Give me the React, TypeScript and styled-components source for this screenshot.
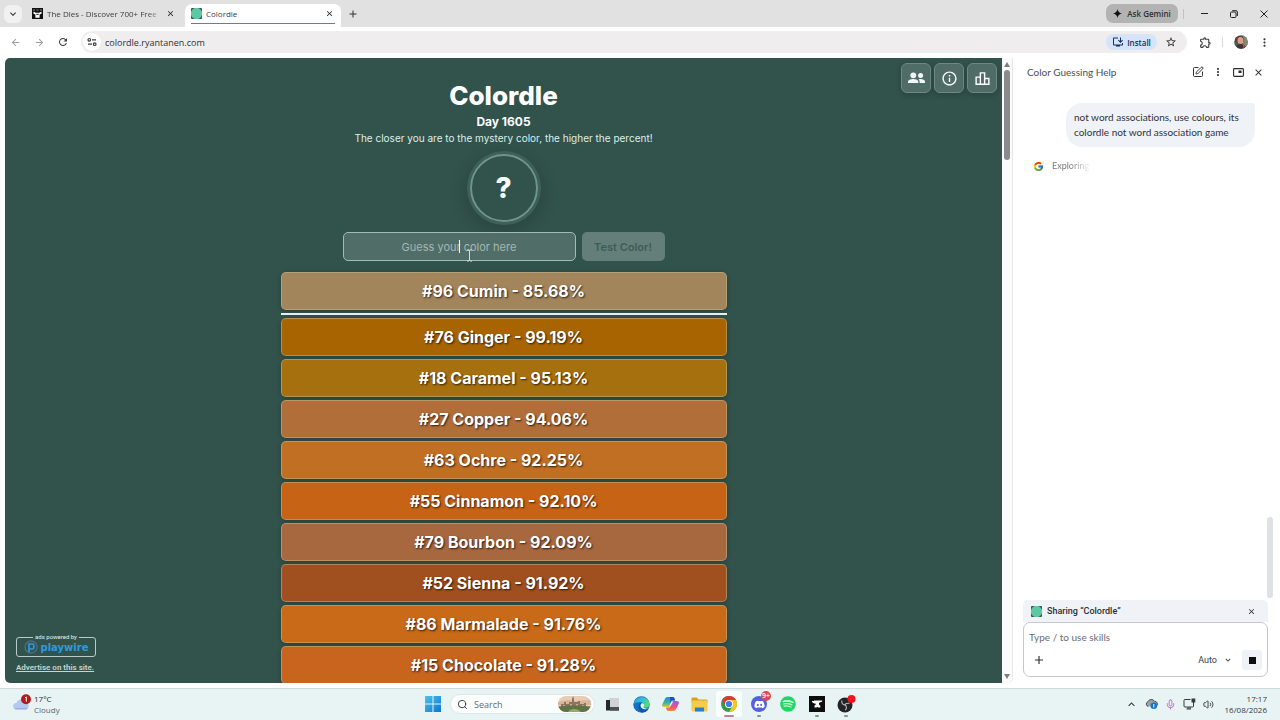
import React from "react";
import styled, { createGlobalStyle } from "styled-components";
import {
  MdAdd,
  MdArrowBack,
  MdArrowForward,
  MdClose,
  MdInfoOutline,
  MdInstallDesktop,
  MdKeyboardArrowDown,
  MdKeyboardArrowUp,
  MdMoreVert,
  MdOutlineExtension,
  MdOutlineLeaderboard,
  MdRefresh,
  MdStarBorder,
} from "react-icons/md";
import { FcGoogle } from "react-icons/fc";
import { FaDiscord, FaSpotify } from "react-icons/fa";
import { Mic, Search, SquarePen, Volume2 } from "lucide-react";

const UI = `"Open Sans", "Noto Sans", sans-serif`;
const PAGE = `Inter, "Liberation Sans", sans-serif`;
const PANEL = `Lato, Roboto, sans-serif`;

const GlobalStyle = createGlobalStyle`
  *, *::before, *::after { box-sizing: border-box; }
  body { margin: 0; background: #ffffff; font-family: ${UI}; color: #303134; }
  button { border: 0; padding: 0; margin: 0; background: none; color: inherit; font: inherit; cursor: pointer; }
  svg { display: block; flex: none; }
`;

const Desktop = styled.div`
  height: 100vh;
  display: flex;
  flex-direction: column;
  overflow: hidden;
`;

/* ---------- browser chrome ---------- */

const TabStrip = styled.header`
  flex: none;
  height: 27px;
  display: flex;
  align-items: center;
  padding: 0 1px 0 4px;
  background: #e1e1e1;
`;

const TabSearch = styled.button`
  width: 18px;
  height: 18px;
  border-radius: 6px;
  background: #f1f1f1;
  display: grid;
  place-items: center;
`;

const Tab = styled.div<{ $active?: boolean }>`
  align-self: flex-end;
  position: relative;
  width: ${(p) => (p.$active ? 156 : 159)}px;
  height: 23px;
  margin-left: ${(p) => (p.$active ? 0 : 4)}px;
  padding: 0 ${(p) => (p.$active ? 5 : 8)}px 4px 6px;
  display: flex;
  align-items: center;
  gap: 4px;
  border-radius: 7px 7px 0 0;
  background: ${(p) => (p.$active ? "#ffffff" : "transparent")};
  font-size: 8px;
  color: #3c3c3c;
`;

const TabTitle = styled.span<{ $fade?: boolean }>`
  flex: 1;
  min-width: 0;
  white-space: nowrap;
  ${(p) => p.$fade && "mask-image: linear-gradient(90deg, #000 90%, rgba(0, 0, 0, 0.2));"}
`;

const TabClose = styled.button`
  width: 14px;
  height: 14px;
  display: grid;
  place-items: center;
  color: #222222;
`;

const TabLine = styled.div`
  position: absolute;
  left: 6px;
  right: 6px;
  bottom: 3px;
  height: 1px;
  background: #4a7fdc;
`;

const NewTab = styled.button`
  margin-left: 4px;
  width: 16px;
  height: 16px;
  display: grid;
  place-items: center;
`;

const AskGemini = styled.button`
  margin-left: auto;
  height: 19px;
  width: 72px;
  border-radius: 7px;
  background: #b3b3b3;
  display: flex;
  align-items: center;
  justify-content: center;
  gap: 5px;
  font-size: 8px;
  font-weight: 600;
  color: #303030;
`;

const Divider = styled.span<{ $color?: string }>`
  width: 1px;
  height: 10px;
  margin: 0 5px;
  background: ${(p) => p.$color ?? "#c2c2c2"};
`;

const WindowButton = styled.button`
  width: 30px;
  height: 20px;
  display: grid;
  place-items: center;
`;

const Toolbar = styled.nav`
  flex: none;
  height: 31px;
  display: flex;
  align-items: center;
  padding: 0 4px 1px 3px;
  background: #ffffff;
`;

const ToolButton = styled.button<{ $dim?: boolean }>`
  width: 24px;
  height: 20px;
  display: grid;
  place-items: center;
  color: ${(p) => (p.$dim ? "#9a9a9a" : "#3c3c3c")};
`;

const Omnibox = styled.div`
  flex: 1;
  height: 22px;
  margin: 0 6px;
  padding: 0 10px 0 2px;
  border-radius: 11px;
  background: #efeded;
  display: flex;
  align-items: center;
`;

const SiteInfo = styled.button`
  width: 18px;
  height: 18px;
  border-radius: 9px;
  background: #ffffff;
  display: grid;
  place-items: center;
`;

const Address = styled.input`
  flex: 1;
  min-width: 0;
  margin-left: 4px;
  padding: 0;
  border: 0;
  outline: 0;
  background: transparent;
  font: 9px ${UI};
  color: #303134;
`;

const Install = styled.button`
  height: 16px;
  width: 51px;
  margin-right: 8px;
  border-radius: 8px;
  background: #d5e4f9;
  color: #15305e;
  display: flex;
  align-items: center;
  justify-content: center;
  gap: 3px;
  font-size: 8px;
  font-weight: 600;
`;

const Avatar = styled.button`
  margin: 0 4px 0 6px;
`;

/* ---------- page ---------- */

const Content = styled.div`
  flex: 1;
  min-height: 0;
  display: flex;
  padding: 0 0 5px 5px;
`;

const Page = styled.main`
  flex: 1;
  min-width: 0;
  position: relative;
  overflow: hidden;
  border-radius: 5px 0 0 5px;
  background: #32524c;
  color: #ffffff;
  font-family: ${PAGE};
  display: flex;
  flex-direction: column;
  align-items: center;
`;

const CornerTools = styled.div`
  position: absolute;
  top: 5px;
  right: 5px;
  display: flex;
  gap: 3px;
`;

const CornerButton = styled.button`
  width: 30px;
  height: 30px;
  border: 1px solid #6f8984;
  border-radius: 6px;
  background: #4f6c67;
  box-shadow: 0 2px 6px rgba(0, 0, 0, 0.18);
  display: grid;
  place-items: center;
`;

const Title = styled.h1`
  margin: 20px 0 0;
  font-size: 26px;
  line-height: 36px;
  font-weight: 800;
`;

const Day = styled.p`
  margin: 0;
  font-size: 12px;
  line-height: 16px;
  font-weight: 700;
`;

const Tagline = styled.p`
  margin: 0;
  font-size: 10px;
  line-height: 16px;
  color: #dcefea;
`;

const Mystery = styled.div`
  flex: none;
  width: 68px;
  height: 68px;
  margin: 8px 0 10px;
  border: 2px solid #6f958a;
  border-radius: 50%;
  box-shadow: 0 0 0 3px #3d6158, 0 5px 18px 4px rgba(0, 0, 0, 0.16);
  display: grid;
  place-items: center;
  font-size: 28px;
  font-weight: 800;
  color: #f4faf8;
`;

const GuessForm = styled.form`
  display: flex;
  flex: none;
  gap: 6px;
`;

const GuessField = styled.div`
  position: relative;
  width: 233px;
  height: 29px;
`;

const GuessInput = styled.input`
  width: 100%;
  height: 100%;
  padding: 0;
  border: 1px solid #9fbdb4;
  border-radius: 5px;
  outline: 0;
  background: #516d68;
  caret-color: transparent;
  text-align: center;
  font: 11px ${PAGE};
  color: #ffffff;
  &::placeholder { color: #a3b8b2; opacity: 1; }
`;

const Caret = styled.span`
  position: absolute;
  left: 50%;
  top: 8px;
  width: 1px;
  height: 13px;
  background: #ffffff;
`;

const Pointer = styled.svg`
  position: absolute;
  left: 123px;
  top: 17px;
`;

const TestButton = styled.button`
  width: 83px;
  height: 29px;
  border-radius: 5px;
  background: #647f79;
  color: #3f5b55;
  font-size: 11px;
  font-weight: 600;
`;

const Guesses = styled.ol`
  flex: none;
  width: 446px;
  max-width: 100%;
  margin: 11px 0 0;
  padding: 0;
  list-style: none;
  display: flex;
  flex-direction: column;
  gap: 3px;
`;

const Guess = styled.li<{ $color: string }>`
  flex: none;
  height: 38px;
  border: 1px solid rgba(190, 190, 150, 0.5);
  border-radius: 5px;
  background: ${(p) => p.$color};
  box-shadow: 0 1px 4px rgba(20, 30, 20, 0.35);
  display: grid;
  place-items: center;
  font-size: 16px;
  font-weight: 700;
  text-shadow: 1px 1px 2px rgba(0, 0, 0, 0.75);
`;

const Rule = styled.li`
  height: 2px;
  background: #e6f0f2;
`;

const AdCorner = styled.aside`
  position: absolute;
  left: 11px;
  bottom: 9px;
  display: flex;
  flex-direction: column;
  gap: 5px;
`;

const Playwire = styled.a`
  position: relative;
  width: 80px;
  height: 20px;
  border: 1px solid #b9cbc7;
  border-radius: 3px;
  display: flex;
  align-items: center;
  justify-content: center;
  gap: 3px;
  color: #2d9ae0;
  text-decoration: none;
  font: 700 10px "DejaVu Sans", sans-serif;
`;

const AdLabel = styled.span`
  position: absolute;
  top: -5px;
  left: 16px;
  right: 16px;
  background: #32524c;
  color: #e6efed;
  text-align: center;
  white-space: nowrap;
  font: 400 6px/8px Roboto, sans-serif;
`;

const Advertise = styled.a`
  color: #c5d5d1;
  font-family: Roboto, sans-serif;
  font-size: 8px;
  line-height: 12px;
  font-weight: 600;
`;

const Scrollbar = styled.div`
  flex: none;
  width: 11px;
  padding: 4px 0;
  border-right: 1px solid #e6e6e6;
  border-radius: 0 0 5px 0;
  background: #fbfbfb;
  display: flex;
  flex-direction: column;
  align-items: center;
`;

const PageThumb = styled.div`
  width: 6px;
  height: 90px;
  margin: 3px 0 auto;
  border-radius: 3px;
  background: #8b8b8b;
`;

/* ---------- assistant panel ---------- */

const Panel = styled.aside`
  flex: none;
  width: 267px;
  padding: 0 12px 6px 10px;
  display: flex;
  flex-direction: column;
  font-family: ${PANEL};
  font-variant-ligatures: none;
`;

const PanelHeader = styled.div`
  height: 28px;
  padding: 0 0 0 4px;
  display: flex;
  align-items: center;
  color: #303134;
`;

const PanelTitle = styled.h2`
  flex: 1;
  margin: 0;
  font-size: 10px;
  font-weight: 400;
  color: #4b4e52;
`;

const PanelButton = styled.button`
  width: 20px;
  height: 20px;
  display: grid;
  place-items: center;
`;

const Conversation = styled.div`
  flex: 1;
  min-height: 0;
  display: flex;
  flex-direction: column;
  padding: 17px 13px 0 10px;
`;

const Bubble = styled.p`
  align-self: flex-end;
  width: 189px;
  margin: 0;
  padding: 7px 8px;
  border-radius: 16px 3px 16px 16px;
  background: #eff3f8;
  font-size: 10px;
  line-height: 15px;
  color: #303236;
`;

const Status = styled.div`
  display: flex;
  align-items: center;
  gap: 8px;
  margin-top: 13px;
  font-size: 9px;
  line-height: 12px;
  color: #777777;
`;

const StatusText = styled.span`
  mask-image: linear-gradient(90deg, #000 45%, rgba(0, 0, 0, 0.1));
`;

const PanelThumb = styled.div`
  align-self: flex-end;
  width: 6px;
  height: 81px;
  margin: 0 -5px 2px 0;
  border-radius: 3px;
  background: #dfe2e5;
`;

const Sharing = styled.div`
  height: 22px;
  padding: 0 7px 0 8px;
  border-radius: 5px 5px 0 0;
  background: #eff3f8;
  display: flex;
  align-items: center;
  gap: 5px;
  font-family: Roboto, sans-serif;
  font-size: 9px;
  font-weight: 500;
  color: #2c2e31;
`;

const SharingText = styled.span`
  flex: 1;
`;

const Composer = styled.form`
  height: 55px;
  padding: 6px 5px;
  border: 1px solid #c4c7cc;
  border-radius: 7px;
  background: #ffffff;
  display: flex;
  flex-direction: column;
  justify-content: space-between;
`;

const Prompt = styled.input`
  height: 16px;
  padding: 0;
  border: 0;
  outline: 0;
  font: 10px ${PANEL};
  &::placeholder { color: #6a6d71; opacity: 1; }
`;

const ComposerRow = styled.div`
  display: flex;
  align-items: center;
`;

const ModeButton = styled.button`
  margin-left: auto;
  margin-right: 9px;
  display: flex;
  align-items: center;
  gap: 6px;
  font-family: Roboto, sans-serif;
  font-size: 9px;
  color: #3a3c40;
`;

const Stop = styled.button`
  width: 20px;
  height: 20px;
  border-radius: 4px;
  background: #eff3f7;
  display: grid;
  place-items: center;
`;

/* ---------- taskbar ---------- */

const Taskbar = styled.footer`
  flex: none;
  height: 32px;
  padding: 0 13px 1px 12px;
  border-top: 1px solid #cddad9;
  background: #e8f4f4;
  display: grid;
  grid-template-columns: 1fr auto 1fr;
  align-items: center;
`;

const Weather = styled.button`
  justify-self: start;
  display: flex;
  align-items: center;
  gap: 2px;
  text-align: left;
  font-size: 8px;
  line-height: 11px;
  color: #2b2f30;
`;

const Muted = styled.span`
  color: #5c6465;
`;

const Stack = styled.span`
  display: flex;
  flex-direction: column;
`;

const Apps = styled.div`
  display: flex;
  align-items: center;
  gap: 5px;
`;

const AppButton = styled.button<{ $active?: boolean }>`
  position: relative;
  width: ${(p) => (p.$active ? 26 : 24)}px;
  height: 26px;
  border-radius: 3px;
  background: ${(p) => (p.$active ? "#fafdfd" : "transparent")};
  display: grid;
  place-items: center;
`;

const Running = styled.span<{ $wide?: boolean }>`
  position: absolute;
  bottom: 0;
  left: ${(p) => (p.$wide ? 8 : 10)}px;
  right: ${(p) => (p.$wide ? 8 : 10)}px;
  height: 2px;
  border-radius: 1px;
  background: ${(p) => (p.$wide ? "#c47f9f" : "#8b9293")};
`;

const Badge = styled.span`
  position: absolute;
  top: 0;
  right: 0;
  min-width: 10px;
  height: 10px;
  border-radius: 5px;
  background: #d64a5b;
  color: #ffffff;
  text-align: center;
  font: 600 7px/10px ${UI};
`;

const SearchBox = styled.label`
  width: 145px;
  height: 20px;
  padding: 0 3px 0 6px;
  border: 1px solid #dce7e7;
  border-radius: 10px;
  background: #fcfefe;
  display: flex;
  align-items: center;
  gap: 6px;
`;

const SearchInput = styled.input`
  flex: 1;
  min-width: 0;
  padding: 0;
  border: 0;
  outline: 0;
  background: transparent;
  font: 9px ${UI};
  &::placeholder { color: #666b6c; opacity: 1; }
`;

const Tray = styled.div`
  justify-self: end;
  display: flex;
  align-items: center;
  gap: 7px;
  color: #34393a;
`;

const Clock = styled.time`
  margin-left: 4px;
  text-align: right;
  font-size: 8px;
  line-height: 11px;
`;

/* ---------- drawings ---------- */

const ColordleIcon = () => (
  <svg width="11" height="11" viewBox="0 0 11 11">
    <rect width="11" height="11" rx="1" fill="#34524b" />
    <circle cx="5.5" cy="5.5" r="5.7" fill="#5cc9a3" />
  </svg>
);

const DlesIcon = () => (
  <svg width="11" height="11" viewBox="0 0 11 11">
    <rect width="11" height="11" fill="#111" />
    <path d="M1 1.5h2v1H1zM4.5 1.5h2v1h-2zM8 1.5h2v1H8z" fill="#888" />
    <path d="M1.5 3.5l2.3 1.2h3.4l2.3-1.2v2.2L7.6 6.6v3.2H3.4V6.6L1.5 5.7z" fill="#fff" />
    <path d="M4.3 5.8h2.4v1H4.3z" fill="#111" />
  </svg>
);

const SparkIcon = () => (
  <svg width="9" height="9" viewBox="0 0 10 10">
    <path d="M5 0C5.5 3 7 4.5 10 5C7 5.5 5.5 7 5 10C4.5 7 3 5.5 0 5C3 4.5 4.5 3 5 0z" fill="#111" />
  </svg>
);

const RestoreIcon = () => (
  <svg width="8" height="8" viewBox="0 0 8 8" fill="none" stroke="#222">
    <rect x="0.5" y="2" width="5.5" height="5.5" rx="1" />
    <path d="M2.2 0.7H6a1.4 1.4 0 0 1 1.4 1.4V6" />
  </svg>
);

const TuneIcon = () => (
  <svg width="10" height="10" viewBox="0 0 10 10" fill="none" stroke="#3c3c3c" strokeWidth="1.2">
    <circle cx="2.3" cy="2.8" r="1.3" />
    <path d="M5 2.8h4M1 7.2h4" />
    <circle cx="7.7" cy="7.2" r="1.3" />
  </svg>
);

const PhotoIcon = () => (
  <svg width="14" height="14" viewBox="0 0 14 14">
    <clipPath id="face"><circle cx="7" cy="7" r="6.8" /></clipPath>
    <g clipPath="url(#face)">
      <rect width="14" height="14" fill="#4c5a50" />
      <path d="M9 0h5v14H9z" fill="#7d8c70" />
      <path d="M1 4C2 0 9 0 10 4v3H1z" fill="#6d3a35" />
      <ellipse cx="6.5" cy="5.5" rx="3" ry="3.6" fill="#d9a08c" />
      <path d="M2 14c0-4 3-5 5-5s5 1 5 5z" fill="#3a3436" />
      <path d="M8 8l3 2-1 4z" fill="#b8505a" />
    </g>
  </svg>
);

const FriendsIcon = () => (
  <svg width="17" height="12" viewBox="0 0 17 12" fill="#f2f8f6">
    <circle cx="5.3" cy="3.3" r="2.9" />
    <path d="M0 11V9.600C0 7.900 2.400 7 5.200 7s5.100.9 5.100 2.600V11z" />
    <circle cx="12.6" cy="3.500" r="2.500" />
    <path d="M11.600 11V9.500c0-1-.4-1.800-1-2.300 3.300-.5 6.400.4 6.400 2.300V11z" />
  </svg>
);

const PipIcon = () => (
  <svg width="11" height="9" viewBox="0 0 11 9">
    <rect x="0.6" y="0.6" width="9.8" height="7.8" rx="0.8" fill="none" stroke="#2b2b2b" strokeWidth="1.1" />
    <rect x="5.5" y="2.5" width="3" height="2.5" fill="#2b2b2b" />
  </svg>
);

const PlaywireMark = () => (
  <svg width="14" height="14" viewBox="0 0 14 14" fill="none">
    <circle cx="7" cy="7" r="6" stroke="#4d6b80" strokeWidth="1.4" />
    <path d="M5 12V4h3.500a1.300 1.300 0 0 1 1.300 1.300v2.400A1.300 1.300 0 0 1 8.500 9H5" stroke="#2d9ae0" strokeWidth="1.7" />
  </svg>
);

const CloudIcon = () => (
  <svg width="20" height="20" viewBox="0 0 20 20">
    <path d="M4.500 15.500a3.300 3.300 0 0 1 0-6.600 4.800 4.800 0 0 1 8.800-.8 3.800 3.800 0 0 1 .7 7.400z" fill="#b5c8f2" />
    <path d="M3 14.800h12" stroke="#8fa6dd" />
    <circle cx="14" cy="5.2" r="5" fill="#b3191f" />
    <path d="M13 3.800l1.300-.9v4.700" stroke="#fff" fill="none" />
  </svg>
);

const WindowsIcon = () => (
  <svg width="16" height="16" viewBox="0 0 16 16">
    <linearGradient id="win" x1="0" y1="0" x2="1" y2="1">
      <stop offset="0" stopColor="#4cc4f0" />
      <stop offset="1" stopColor="#0f74cc" />
    </linearGradient>
    <path d="M0 0h7.500v7.500H0zM8.500 0H16v7.500H8.500zM0 8.500h7.500V16H0zM8.500 8.500H16V16H8.500z" fill="url(#win)" />
  </svg>
);

const LandmarkIcon = () => (
  <svg width="33" height="16" viewBox="0 0 33 16">
    <clipPath id="oval"><rect width="33" height="16" rx="8" /></clipPath>
    <g clipPath="url(#oval)">
      <rect width="33" height="16" fill="#e8cdb4" />
      <path d="M0 6l9-2 8 1 16-1v5H0z" fill="#d9b49b" />
      <path d="M3 11V8h3V6h2v2h3V6h3V3l1-3 1 3v3h4V5h2v3h4V7h2v4z" fill="#8d7460" />
      <path d="M5 9h2v2H5zM12 8h2v3h-2zM18 8h2v3h-2zM24 9h2v2h-2z" fill="#c9a98a" />
      <path d="M0 10.500c8-1.500 24-1.500 33 0V16H0z" fill="#5f7344" />
      <path d="M10 16c2-4 10-4 13 0z" fill="#9aa869" />
    </g>
  </svg>
);

const TaskViewIcon = () => (
  <svg width="13" height="13" viewBox="0 0 13 13">
    <rect x="3" y="0" width="10" height="9" fill="#cfd3d3" />
    <path d="M0 2h4v7h9v3.500H0z" fill="#26292a" />
    <path d="M4 9h9v3.500H4z" fill="#4c5051" />
  </svg>
);

const EdgeIcon = () => (
  <svg width="17" height="17" viewBox="0 0 17 17">
    <linearGradient id="edgeTop" x1="0" y1="0" x2="1" y2="0.5">
      <stop offset="0" stopColor="#1f9ad8" />
      <stop offset="0.5" stopColor="#35bfd8" />
      <stop offset="1" stopColor="#5bd877" />
    </linearGradient>
    <circle cx="8.5" cy="8.5" r="8.2" fill="#1670c4" />
    <path d="M0.500 8A8.200 8.200 0 0 1 16.700 8c0 2.800-2.200 3.700-4 3.700-1.700 0-2.600-.6-2.200-1.300C11.800 8.300 9.900 6 7 6 4 6 1 7 .5 8z" fill="url(#edgeTop)" />
    <path d="M5.500 10.500C5.500 7.600 8 6.500 9.300 7.200 8 7.200 7.300 8.500 7.500 10c.4 3 4 4.500 8 2.700-1.500 2.800-4 4-6.500 3.800-2.200-.5-3.500-3-3.500-6z" fill="#0f57a8" />
    <path d="M9 7.200c-1.800.6-1.900 3.300-.4 4.700 1.700 1.500 4.600 1.700 7 .7-1.600.2-4.500.2-5-1-.4-1 1.200-1.500.3-3.300C10.400 7.400 9.700 7 9 7.200z" fill="#e8f4f4" />
  </svg>
);

const CopilotIcon = () => (
  <svg width="17" height="16" viewBox="0 0 17 16">
    <linearGradient id="coA" x1="0" y1="0" x2="0" y2="1">
      <stop offset="0" stopColor="#1f8ae0" />
      <stop offset="0.6" stopColor="#37b79b" />
      <stop offset="1" stopColor="#f2c230" />
    </linearGradient>
    <linearGradient id="coB" x1="0" y1="0" x2="0" y2="1">
      <stop offset="0" stopColor="#9a5be8" />
      <stop offset="0.6" stopColor="#f0527f" />
      <stop offset="1" stopColor="#f58a3a" />
    </linearGradient>
    <path d="M5.500 1h5a2 2 0 0 1 2 1.600L13 4.500H9.500L7.600 11H2a2 2 0 0 1-1.800-2.600L3 2.800A2.600 2.600 0 0 1 5.500 1z" fill="url(#coA)" />
    <path d="M11.500 15h-5a2 2 0 0 1-2-1.600L4 11.500h3.500L9.400 5H15a2 2 0 0 1 1.800 2.600L14 13.200a2.600 2.600 0 0 1-2.500 1.800z" fill="url(#coB)" />
    <path d="M8 1h2.500a2 2 0 0 1 2 1.600L13 4.500H9.500L8.500 8z" fill="#1b4fb0" />
    <path d="M9.300 5.500h2L8.200 10.800H7.200z" fill="#eef7f7" />
  </svg>
);

const FolderIcon = () => (
  <svg width="17" height="15" viewBox="0 0 17 15">
    <path d="M0.500 1.500A1 1 0 0 1 1.500.5h4.300l1.700 2h8a1 1 0 0 1 1 1V6H.5z" fill="#d9a21c" />
    <rect x="0.5" y="3.5" width="16" height="11" rx="1" fill="#f5cb4e" />
    <path d="M4 10.500h9v4H4z" fill="#2580c9" />
  </svg>
);

const ChromeIcon = () => (
  <svg width="16" height="16" viewBox="0 0 16 16">
    <circle cx="8" cy="8" r="8" fill="#2f9c4c" />
    <path d="M8 4h6.930A8 8 0 0 1 8 16l3.460-6z" fill="#f6c722" />
    <path d="M1.070 4A8 8 0 0 1 14.930 4H8L4.540 10z" fill="#dc3d31" />
    <circle cx="8" cy="8" r="4" fill="#fff" />
    <circle cx="8" cy="8" r="3.1" fill="#3b7de0" />
  </svg>
);

const Disc = styled.span<{ $color: string }>`
  width: 16px;
  height: 16px;
  border-radius: 8px;
  background: ${(p) => p.$color};
  color: #ffffff;
  display: grid;
  place-items: center;
`;

const AnvilIcon = () => (
  <svg width="16" height="16" viewBox="0 0 16 16">
    <rect width="16" height="16" fill="#0d0d0d" />
    <path d="M2.800 5h2.200v-.6h8.200v1.400c-2 .2-3.300.9-3.300 1.900 0 .9.500 1.400 1.400 1.700v2H9.400c0-.7-1.900-.7-1.900 0H5.500v-2c.9-.3 1.400-.8 1.400-1.700-2 0-3.800-.8-4.100-2.700z" fill="#fff" />
  </svg>
);

const ObsIcon = () => (
  <svg width="20" height="18" viewBox="0 0 20 18">
    <circle cx="9" cy="10" r="7.5" fill="#222426" />
    <g fill="none" stroke="#b9bdc0" strokeWidth="1.1">
      <path d="M6 5.500c-.8 2.300.5 4.200 3 4.500" />
      <path d="M13.500 8.500c-2.400-.6-4.300.3-4.500 1.700" />
      <path d="M9.200 15c1.700-1.400 1.700-3.800-.2-5" />
    </g>
    <circle cx="15.5" cy="4" r="4" fill="#f0141e" />
  </svg>
);

const OneDriveIcon = () => (
  <svg width="13" height="12" viewBox="0 0 13 12">
    <path d="M3.200 8.500A2.500 2.500 0 0 1 3 3.700 3.600 3.600 0 0 1 9.500 3.300a2.700 2.700 0 0 1 2 4.700" fill="#9aa1a3" stroke="#4c5355" />
    <circle cx="8.8" cy="7.8" r="3.3" fill="#1277cc" />
    <path d="M8.800 6v3.500" stroke="#fff" />
  </svg>
);

const NetworkIcon = () => (
  <svg width="13" height="12" viewBox="0 0 13 12" fill="none" stroke="#34393a">
    <path d="M7.500 1.500H2a1 1 0 0 0-1 1V8a1 1 0 0 0 1 1h7.500a1 1 0 0 0 1-1V6.500M3.500 11h4.500M5 9v2M7 9v2" />
    <rect x="9" y="1" width="2.8" height="3" fill="#34393a" />
    <path d="M10.500 4v3" />
  </svg>
);

const ArrowGlyph = ({ down }: { down?: boolean }) => (
  <svg width="6" height="5" viewBox="0 0 6 5">
    <path d={down ? "M0 0h6L3 5z" : "M0 5h6L3 0z"} fill="#7d7d7d" />
  </svg>
);

/* ---------- data ---------- */

const latest = { label: "#96 Cumin - 85.68%", color: "#a3855b" };

const ranked = [
  { label: "#76 Ginger - 99.19%", color: "#a86400" },
  { label: "#18 Caramel - 95.13%", color: "#a7700f" },
  { label: "#27 Copper - 94.06%", color: "#b16e38" },
  { label: "#63 Ochre - 92.25%", color: "#c17023" },
  { label: "#55 Cinnamon - 92.10%", color: "#c76314" },
  { label: "#79 Bourbon - 92.09%", color: "#a8683f" },
  { label: "#52 Sienna - 91.92%", color: "#a0501f" },
  { label: "#86 Marmalade - 91.76%", color: "#c86a17" },
  { label: "#15 Chocolate - 91.28%", color: "#c7641e" },
];

export default function App() {
  return (
    <Desktop>
      <GlobalStyle />
      <TabStrip>
        <TabSearch aria-label="Search tabs"><MdKeyboardArrowDown size={12} /></TabSearch>
        <Tab>
          <DlesIcon />
          <TabTitle $fade>The Dles - Discover 700+ Free D</TabTitle>
          <TabClose aria-label="Close tab"><MdClose size={9} /></TabClose>
        </Tab>
        <Tab $active>
          <ColordleIcon />
          <TabTitle>Colordle</TabTitle>
          <TabClose aria-label="Close tab"><MdClose size={9} /></TabClose>
          <TabLine />
        </Tab>
        <NewTab aria-label="New tab"><MdAdd size={12} /></NewTab>
        <AskGemini><SparkIcon />Ask Gemini</AskGemini>
        <Divider />
        <WindowButton aria-label="Minimize">
          <svg width="7" height="1" viewBox="0 0 7 1"><path d="M0 0h7v1H0z" fill="#222" /></svg>
        </WindowButton>
        <WindowButton aria-label="Restore"><RestoreIcon /></WindowButton>
        <WindowButton aria-label="Close">
          <svg width="8" height="8" viewBox="0 0 8 8"><path d="M.5.5l7 7M7.500.5l-7 7" stroke="#222" /></svg>
        </WindowButton>
      </TabStrip>

      <Toolbar>
        <ToolButton $dim aria-label="Back"><MdArrowBack size={11} /></ToolButton>
        <ToolButton $dim aria-label="Forward"><MdArrowForward size={11} /></ToolButton>
        <ToolButton aria-label="Reload"><MdRefresh size={12} /></ToolButton>
        <Omnibox>
          <SiteInfo aria-label="Site information"><TuneIcon /></SiteInfo>
          <Address aria-label="Address" defaultValue="colordle.ryantanen.com" />
          <Install><MdInstallDesktop size={12} />Install</Install>
          <MdStarBorder size={12} />
        </Omnibox>
        <ToolButton aria-label="Extensions"><MdOutlineExtension size={13} /></ToolButton>
        <Divider $color="#d8d8d8" />
        <Avatar aria-label="Profile"><PhotoIcon /></Avatar>
        <ToolButton aria-label="Menu"><MdMoreVert size={13} /></ToolButton>
      </Toolbar>

      <Content>
        <Page>
          <CornerTools>
            <CornerButton aria-label="Friends"><FriendsIcon /></CornerButton>
            <CornerButton aria-label="How to play"><MdInfoOutline size={17} /></CornerButton>
            <CornerButton aria-label="Statistics"><MdOutlineLeaderboard size={17} /></CornerButton>
          </CornerTools>
          <Title>Colordle</Title>
          <Day>Day 1605</Day>
          <Tagline>The closer you are to the mystery color, the higher the percent!</Tagline>
          <Mystery>?</Mystery>
          <GuessForm>
            <GuessField>
              <GuessInput aria-label="Guess" placeholder="Guess your color here" />
              <Caret />
              <Pointer width="7" height="13" viewBox="0 0 7 13" fill="none" stroke="#d5e0dd">
                <path d="M1 1h2l.5.5L4 1h2M3.500 1.500v10M1 12h2l.5-.5.5.5h2" />
              </Pointer>
            </GuessField>
            <TestButton type="button">Test Color!</TestButton>
          </GuessForm>
          <Guesses>
            <Guess $color={latest.color}>{latest.label}</Guess>
            <Rule aria-hidden="true" />
            {ranked.map((g) => (
              <Guess key={g.label} $color={g.color}>{g.label}</Guess>
            ))}
          </Guesses>
          <AdCorner>
            <Playwire href="#playwire">
              <AdLabel>ads powered by</AdLabel>
              <PlaywireMark />
              playwire
            </Playwire>
            <Advertise href="#advertise">Advertise on this site.</Advertise>
          </AdCorner>
        </Page>
        <Scrollbar>
          <ArrowGlyph />
          <PageThumb />
          <ArrowGlyph down />
        </Scrollbar>

        <Panel>
          <PanelHeader>
            <PanelTitle>Color Guessing Help</PanelTitle>
            <PanelButton aria-label="New chat"><SquarePen size={12} /></PanelButton>
            <PanelButton aria-label="More"><MdMoreVert size={12} /></PanelButton>
            <PanelButton aria-label="Pop out"><PipIcon /></PanelButton>
            <PanelButton aria-label="Close panel"><MdClose size={11} /></PanelButton>
          </PanelHeader>
          <Conversation>
            <Bubble>not word associations, use colours, its colordle not word association game</Bubble>
            <Status><FcGoogle size={11} /><StatusText>Exploring</StatusText></Status>
          </Conversation>
          <PanelThumb />
          <Sharing>
            <ColordleIcon />
            <SharingText>Sharing “Colordle”</SharingText>
            <PanelButton aria-label="Stop sharing"><MdClose size={9} /></PanelButton>
          </Sharing>
          <Composer>
            <Prompt aria-label="Message" placeholder="Type / to use skills" />
            <ComposerRow>
              <PanelButton type="button" aria-label="Add"><MdAdd size={14} /></PanelButton>
              <ModeButton type="button">Auto<MdKeyboardArrowDown size={10} /></ModeButton>
              <Stop type="button" aria-label="Stop">
                <svg width="7" height="7" viewBox="0 0 7 7"><path d="M0 0h7v7H0z" fill="#0c0d0e" /></svg>
              </Stop>
            </ComposerRow>
          </Composer>
        </Panel>
      </Content>

      <Taskbar>
        <Weather>
          <CloudIcon />
          <Stack><span>17°C</span><Muted>Cloudy</Muted></Stack>
        </Weather>
        <Apps>
          <AppButton aria-label="Start"><WindowsIcon /></AppButton>
          <SearchBox>
            <Search size={11} />
            <SearchInput aria-label="Search" placeholder="Search" />
            <LandmarkIcon />
          </SearchBox>
          <AppButton aria-label="Task view"><TaskViewIcon /></AppButton>
          <AppButton aria-label="Edge"><EdgeIcon /></AppButton>
          <AppButton aria-label="Copilot"><CopilotIcon /></AppButton>
          <AppButton aria-label="Files"><FolderIcon /></AppButton>
          <AppButton $active aria-label="Chrome"><ChromeIcon /><Running $wide /></AppButton>
          <AppButton aria-label="Discord">
            <Disc $color="#5460dd"><FaDiscord size={11} /></Disc>
            <Badge>9+</Badge>
            <Running />
          </AppButton>
          <AppButton aria-label="Spotify"><FaSpotify size={16} color="#1ed760" /></AppButton>
          <AppButton aria-label="Anvil"><AnvilIcon /><Running /></AppButton>
          <AppButton aria-label="OBS"><ObsIcon /><Running /></AppButton>
        </Apps>
        <Tray>
          <MdKeyboardArrowUp size={13} />
          <OneDriveIcon />
          <Mic size={11} color="#b66cc0" />
          <NetworkIcon />
          <Volume2 size={11} />
          <Clock>
            <Stack><span>17:17</span><span>16/08/2026</span></Stack>
          </Clock>
        </Tray>
      </Taskbar>
    </Desktop>
  );
}
